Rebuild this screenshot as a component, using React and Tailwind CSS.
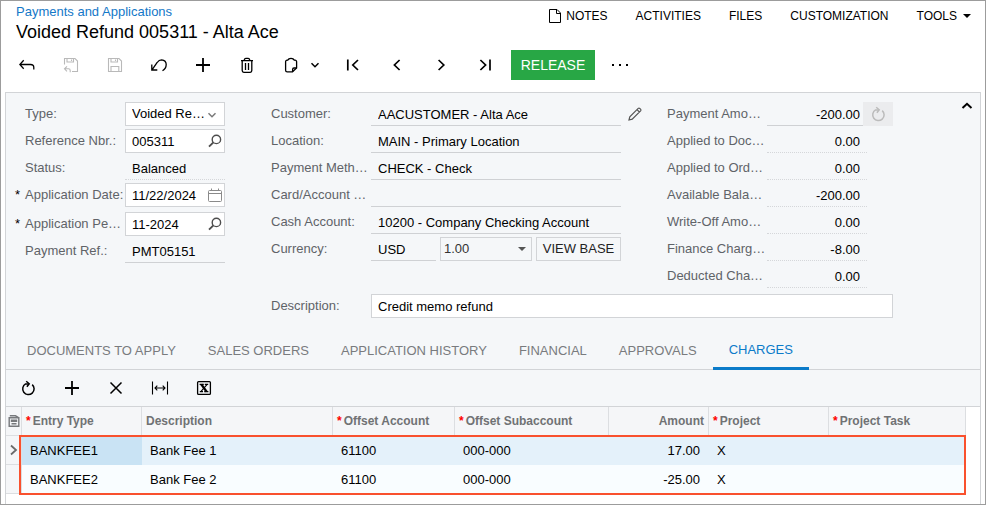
import React from 'react';
import clsx from 'clsx';

const Icon = ({ size = 16, width = 1, className, children }) => (
    <svg
        width={size}
        height={size}
        viewBox={`0 0 ${size} ${size}`}
        fill="none"
        stroke="currentColor"
        strokeWidth={width}
        className={clsx('shrink-0', className)}
        aria-hidden="true"
    >
        {children}
    </svg>
);

const BackIcon = () => (
    <Icon width={1.3}>
        <path d="M4.7 3.3 L0.8 7.5 L4.7 11.7 M1 7.5 H11.5 Q14.8 7.5 14.8 10.5 V12.5" />
    </Icon>
);

const SaveCloseIcon = () => (
    <Icon width={1.1}>
        <path d="M1.5 7.5 V1.5 H12 L14.5 4 V14.5 H9 M4 1.5 V5 H10.5 V1.5 M8.5 2.5 V4" />
        <path d="M4 9.3 L1.5 11.8 L4 14.3 M1.5 11.8 H5.5 Q7.2 11.8 7.2 13.5 V15.2" />
    </Icon>
);

const SaveIcon = () => (
    <Icon width={1.1}>
        <path d="M1.5 1.5 H12 L14.5 4 V14.5 H1.5 Z M4 1.5 V5 H10.5 V1.5 M8.5 2.5 V4 M4 14.5 V9.5 H11.8 V14.5" />
    </Icon>
);

const UndoIcon = () => (
    <Icon width={1.3}>
        <path d="M0.8 7.5 V13 H6.3 M1 12.8 L6.2 5.5 Q8 2.8 10.6 2.8 Q15.2 3.2 15.2 7.5 Q15.2 11.5 11.5 13.8" />
    </Icon>
);

const PlusIcon = () => (
    <Icon width={1.8}>
        <path d="M8 1 V15 M1 8 H15" />
    </Icon>
);

const TrashIcon = () => (
    <Icon width={1.3}>
        <path d="M2 3.6 H14 M5.3 3.4 Q5.3 1.4 7 1.4 H9 Q10.7 1.4 10.7 3.4 M3.2 3.6 V13.6 Q3.2 15.3 4.8 15.3 H11.2 Q12.8 15.3 12.8 13.6 V3.6 M6.5 6 V13 M9.5 6 V13" />
    </Icon>
);

const ClipboardIcon = () => (
    <Icon width={1.3}>
        <path d="M5 3.2 H4.2 Q2.6 3.2 2.6 4.8 V13.2 Q2.6 14.8 4.2 14.8 H9.5 L13.6 11 V4.8 Q13.6 3.2 12 3.2 H11" />
        <path d="M4.8 3.4 Q5.4 1.4 8 1.4 Q10.6 1.4 11.2 3.4" />
        <path d="M9.6 14.8 V12.4 Q9.6 11 11 11 H13.6" />
    </Icon>
);

const ChevronDownIcon = ({ className }) => (
    <Icon size={10} width={1.5} className={className}>
        <path d="M1.5 3.2 L5 6.7 L8.5 3.2" />
    </Icon>
);

const FirstIcon = () => (
    <Icon width={1.7}>
        <path d="M3.8 2.4 V13.6 M14 3 L8.8 8 L14 13" />
    </Icon>
);

const PrevIcon = () => (
    <Icon width={1.7}>
        <path d="M11.6 3 L6.4 8 L11.6 13" />
    </Icon>
);

const NextIcon = () => (
    <Icon width={1.7}>
        <path d="M6.6 3 L11.8 8 L6.6 13" />
    </Icon>
);

const LastIcon = () => (
    <Icon width={1.7}>
        <path d="M4.4 3 L9.6 8 L4.4 13 M14 2.4 V13.6" />
    </Icon>
);

const MoreIcon = () => (
    <Icon size={18} className="fill-current stroke-none">
        <rect x="1" y="8" width="2" height="2" />
        <rect x="8" y="8" width="2" height="2" />
        <rect x="15" y="8" width="2" height="2" />
    </Icon>
);

const NoteIcon = () => (
    <Icon size={14} width={1}>
        <path d="M1.5 0.5 H9 L12.5 4 V13.5 H1.5 Z M8.5 0.5 V4.5 H12.5" />
    </Icon>
);

const RefreshIcon = () => (
    <Icon width={1.5}>
        <path d="M12.2 4.6 A5.7 5.7 0 1 1 5.6 3.9 L9 3.9" />
        <path d="M6.2 1.2 L9.2 3.8 L6.9 6.8" />
    </Icon>
);

const DeleteIcon = () => (
    <Icon width={1.5}>
        <path d="M2.5 2.5 L13.5 13.5 M13.5 2.5 L2.5 13.5" />
    </Icon>
);

const FitColumnsIcon = () => (
    <Icon size={18} width={1.1}>
        <path d="M1.5 2.5 V15.5 M16.5 2.5 V15.5 M4 9 H14 M6.3 6.7 L4 9 L6.3 11.3 M11.7 6.7 L14 9 L11.7 11.3" />
    </Icon>
);

const ExcelIcon = () => (
    <Icon>
        <rect x="1.6" y="1.6" width="12.8" height="12.8" rx="1" strokeWidth={1.3} />
        <path d="M3.6 4.4 H7.8 M8.8 4.4 H12.2 M3.8 11.6 H7 M8.2 11.6 H12.4 M11.2 4.4 L4.8 11.6" strokeWidth={1.1} />
        <path d="M5.3 4.4 L10.6 11.6" strokeWidth={2.4} />
    </Icon>
);

const SearchIcon = () => (
    <Icon size={14} width={1.4}>
        <circle cx="8.4" cy="5.4" r="4.2" />
        <path d="M5.4 8.4 L1 12.6" strokeWidth={1.9} />
    </Icon>
);

const CalendarIcon = () => (
    <Icon size={14} width={1} className="text-[#8a8a8a]">
        <path d="M1.5 2.5 H12.5 Q13.5 2.5 13.5 3.5 V12.5 Q13.5 13.5 12.5 13.5 H1.5 Q0.5 13.5 0.5 12.5 V3.5 Q0.5 2.5 1.5 2.5 Z M0.5 5.5 H13.5 M3.5 0.5 V2.5 M10.5 0.5 V2.5" />
    </Icon>
);

const PencilIcon = () => (
    <Icon size={14} width={1.2}>
        <path d="M1 13 L1.8 9.8 L10.2 1.4 Q11 0.7 12 1.6 L12.5 2.1 Q13.3 3 12.6 3.8 L4.2 12.2 Z M9 2.6 L11.4 5" />
    </Icon>
);

const RecordIcon = () => (
    <Icon size={12} width={1.4} className="text-[#77797c]">
        <path d="M1.2 11.2 V2.7 H10.8 V11.2 Z M1.8 0.8 H7.5 L10.5 2.7 M3.5 5.2 H8.5 V6.4 H3.5 Z M3.5 8.8 H8.5" />
    </Icon>
);

const ToolButton = ({ label, className, children, ...props }) => (
    <button aria-label={label} className={clsx('h-[30px] w-11 flex items-center justify-center', className)} {...props}>
        {children}
    </button>
);

const Row = ({ id, label, required, children }) => (
    <div className="flex h-6">
        <label htmlFor={id} className="w-[110px] shrink-0 flex leading-6 text-[#5f6368] whitespace-nowrap">
            <span className="w-2.5 text-black">{required && '*'}</span>
            {label}
        </label>
        {children}
    </div>
);

const BoxField = ({ id, value, icon, buttonLabel }) => (
    <div className="w-[100px] h-6 flex items-center bg-white border border-[#d2d4d7] pr-px">
        <input id={id} defaultValue={value} className="min-w-0 flex-1 h-full pl-1.5 outline-none" />
        <button type="button" aria-label={buttonLabel} className="text-[#4d4d4d] px-px">{icon}</button>
    </div>
);

const LineField = ({ id, value, dotted, className }) => (
    <input
        id={id}
        readOnly
        defaultValue={value}
        className={clsx(
            'h-6 min-w-0 pt-0.5 px-[7px] text-black outline-none border-b',
            dotted ? 'border-dotted border-[#d5d7da]' : 'border-[#cfd1d4]',
            className
        )}
    />
);

const customerFields = [
    { id: 'location', label: 'Location:', value: 'MAIN - Primary Location' },
    { id: 'method', label: 'Payment Meth…', value: 'CHECK - Check' },
    { id: 'card', label: 'Card/Account …', value: '' },
    { id: 'cash', label: 'Cash Account:', value: '10200 - Company Checking Account' }
];

const amountFields = [
    { id: 'applied-doc', label: 'Applied to Doc…', value: '0.00' },
    { id: 'applied-ord', label: 'Applied to Ord…', value: '0.00' },
    { id: 'available', label: 'Available Bala…', value: '-200.00' },
    { id: 'writeoff', label: 'Write-Off Amo…', value: '0.00' },
    { id: 'finance', label: 'Finance Charg…', value: '-8.00' },
    { id: 'deducted', label: 'Deducted Cha…', value: '0.00' }
];

const tabs = ['DOCUMENTS TO APPLY', 'SALES ORDERS', 'APPLICATION HISTORY', 'FINANCIAL', 'APPROVALS', 'CHARGES'];

const columns = [
    { label: 'Entry Type', required: true },
    { label: 'Description' },
    { label: 'Offset Account', required: true },
    { label: 'Offset Subaccount', required: true },
    { label: 'Amount', right: true },
    { label: 'Project', required: true },
    { label: 'Project Task', required: true }
];

const charges = [
    ['BANKFEE1', 'Bank Fee 1', '61100', '000-000', '17.00', 'X', ''],
    ['BANKFEE2', 'Bank Fee 2', '61100', '000-000', '-25.00', 'X', '']
];

const Header = () => (
    <header className="flex justify-between items-start pl-[15px] pr-3.5 pt-[3px]">
        <div>
            <a href="#payments" className="block leading-4 text-[#1478c8]">Payments and Applications</a>
            <h1 className="text-lg leading-6">Voided Refund 005311 - Alta Ace</h1>
        </div>
        <nav className="flex gap-7 pt-1 text-xs leading-4" aria-label="Document menu">
            <button className="flex items-center gap-1"><NoteIcon />NOTES</button>
            <button>ACTIVITIES</button>
            <button>FILES</button>
            <button>CUSTOMIZATION</button>
            <button className="flex items-center gap-1.5">
                TOOLS
                <svg width="8" height="4" viewBox="0 0 8 4" aria-hidden="true"><path d="M0 0 H8 L4 4 Z" fill="currentColor" /></svg>
            </button>
        </nav>
    </header>
);

const Toolbar = () => (
    <div className="flex items-center pl-1 pt-1.5 pb-3">
        <ToolButton label="Back"><BackIcon /></ToolButton>
        <ToolButton label="Save and close" disabled className="text-[#b9b9b9]"><SaveCloseIcon /></ToolButton>
        <ToolButton label="Save" disabled className="text-[#b9b9b9]"><SaveIcon /></ToolButton>
        <ToolButton label="Undo"><UndoIcon /></ToolButton>
        <ToolButton label="Add"><PlusIcon /></ToolButton>
        <ToolButton label="Delete"><TrashIcon /></ToolButton>
        <button aria-label="Clipboard" className="h-[30px] w-[61px] pl-3.5 flex items-center gap-[11px]">
            <ClipboardIcon />
            <ChevronDownIcon />
        </button>
        <ToolButton label="First"><FirstIcon /></ToolButton>
        <ToolButton label="Previous"><PrevIcon /></ToolButton>
        <ToolButton label="Next"><NextIcon /></ToolButton>
        <ToolButton label="Last"><LastIcon /></ToolButton>
        <button className="ml-[5px] h-[30px] w-[84px] bg-[#28a745] text-white text-sm">RELEASE</button>
        <ToolButton label="More" className="w-[50px]"><MoreIcon /></ToolButton>
    </div>
);

const Summary = () => (
    <form className="flex items-start pt-[9px] pl-[9px] pr-[5px]">
        <div className="w-[246px] shrink-0 flex flex-col gap-[5px]">
            <div className="flex flex-col gap-[3px]">
                <Row id="type" label="Type:">
                    <div className="relative w-[100px] h-6">
                        <select id="type" className="appearance-none w-full h-full pl-1.5 bg-white border border-[#d2d4d7] outline-none">
                            <option>Voided Re…</option>
                        </select>
                        <ChevronDownIcon className="absolute right-2 top-2 text-[#7a7a7a] pointer-events-none" />
                    </div>
                </Row>
                <Row id="ref" label="Reference Nbr.:">
                    <BoxField id="ref" value="005311" icon={<SearchIcon />} buttonLabel="Find reference" />
                </Row>
                <Row id="status" label="Status:">
                    <LineField id="status" value="Balanced" dotted className="w-[100px]" />
                </Row>
                <Row id="date" label="Application Date:" required>
                    <BoxField id="date" value="11/22/2024" icon={<CalendarIcon />} buttonLabel="Pick date" />
                </Row>
            </div>
            <div className="flex flex-col gap-[3px]">
                <Row id="period" label="Application Pe…" required>
                    <BoxField id="period" value="11-2024" icon={<SearchIcon />} buttonLabel="Find period" />
                </Row>
                <Row id="payref" label="Payment Ref.:">
                    <LineField id="payref" value="PMT05151" className="w-[100px]" />
                </Row>
            </div>
        </div>

        <div className="flex flex-col gap-1.5">
            <div className="flex gap-3">
                <div className="w-[384px] flex flex-col gap-[3px]">
                    <Row id="customer" label="Customer:">
                        <LineField id="customer" value="AACUSTOMER - Alta Ace" className="w-[250px]" />
                        <button type="button" aria-label="Edit customer" className="ml-[7px] text-[#555]"><PencilIcon /></button>
                    </Row>
                    {customerFields.map((f) => (
                        <Row key={f.id} id={f.id} label={f.label}>
                            <LineField id={f.id} value={f.value} className="w-[250px]" />
                        </Row>
                    ))}
                    <Row id="currency" label="Currency:">
                        <div className="flex gap-1">
                            <LineField id="currency" value="USD" className="w-[65px]" />
                            <div className="relative w-[92px] h-6">
                                <select aria-label="Rate" className="appearance-none w-full h-full pl-[3px] text-[#333] bg-transparent border border-[#d2d4d7] outline-none">
                                    <option>1.00</option>
                                </select>
                                <svg width="8" height="4" viewBox="0 0 8 4" className="absolute right-1.5 top-2.5 text-[#555] pointer-events-none" aria-hidden="true">
                                    <path d="M0 0 H8 L4 4 Z" fill="currentColor" />
                                </svg>
                            </div>
                            <button type="button" className="w-[85px] h-6 border border-[#d2d4d7] text-[#222] whitespace-nowrap">VIEW BASE</button>
                        </div>
                    </Row>
                </div>

                <div className="flex flex-col gap-[3px]">
                    <Row id="amount" label="Payment Amo…">
                        <LineField id="amount" value="-200.00" className="w-24 text-right !pr-[3px]" />
                        <button type="button" disabled aria-label="Recalculate" className="w-[30px] h-6 flex items-center justify-center bg-[#ebecee] text-[#bbb]">
                            <RefreshIcon />
                        </button>
                    </Row>
                    {amountFields.map((f) => (
                        <Row key={f.id} id={f.id} label={f.label}>
                            <LineField id={f.id} value={f.value} dotted className="w-[100px] text-right" />
                        </Row>
                    ))}
                </div>
            </div>
            <Row id="description" label="Description:">
                <input id="description" defaultValue="Credit memo refund" className="flex-1 h-6 min-w-0 px-1.5 bg-white border border-[#d2d4d7] outline-none" />
            </Row>
        </div>

        <button type="button" aria-label="Collapse" className="ml-auto">
            <Icon width={2}><path d="M3.5 6 L8 1.8 L12.5 6" /></Icon>
        </button>
    </form>
);

const Tabs = () => (
    <div role="tablist" className="mt-3.5 h-[38px] pl-[5px] flex border-b border-[#d2d4d7]">
        {tabs.map((tab) => {
            const active = tab === 'CHARGES';
            return (
                <button
                    key={tab}
                    role="tab"
                    aria-selected={active}
                    className={clsx('h-[38px] px-4 whitespace-nowrap', active ? 'text-[#0b7bc9] border-b-3 border-[#0b7bc9]' : 'text-[#797b7e]')}
                >
                    {tab}
                </button>
            );
        })}
    </div>
);

const Grid = () => (
    <div className="bg-white flex-1 pr-3.5">
        <div className="relative">
            <table className="w-full table-fixed border-separate border-spacing-0">
                <colgroup>
                    <col className="w-4" />
                    <col className="w-[120px]" />
                    <col className="w-[191px]" />
                    <col className="w-[122px]" />
                    <col className="w-[154px]" />
                    <col className="w-[100px]" />
                    <col className="w-[120px]" />
                    <col />
                </colgroup>
                <thead>
                    <tr className="h-[29px] bg-[#f5f6f8] text-xs text-[#707274] text-left">
                        <th className="p-0 pl-0.5 border-r border-b border-[#dcdee1]"><RecordIcon /></th>
                        {columns.map((c) => (
                            <th
                                key={c.label}
                                scope="col"
                                className={clsx('p-0 px-1 border-r border-b border-[#dcdee1] whitespace-nowrap', c.right && 'text-right')}
                            >
                                {c.required && <span className="mr-0.5 text-[#f00]">*</span>}
                                {c.label}
                            </th>
                        ))}
                    </tr>
                </thead>
                <tbody>
                    {charges.map((row, r) => (
                        <tr key={row[0]} className={clsx('h-[29px]', r === 0 ? 'bg-[#e4f1fa]' : 'bg-[#f9fdff]')}>
                            <td className="p-0 pl-0.5 bg-[#f5f6f8] border-r border-b border-[#dcdee1]">
                                {r === 0 && <Icon size={12} width={1.8} className="text-[#6b6b6b]"><path d="M3 1.5 L8 6 L3 10.5" /></Icon>}
                            </td>
                            {row.map((cell, i) => (
                                <td
                                    key={i}
                                    className={clsx('p-0 px-2', i === 4 && 'text-right !pr-[9px]', r === 0 && i === 0 && 'bg-[#c9e3f4]')}
                                >
                                    {cell}
                                </td>
                            ))}
                        </tr>
                    ))}
                </tbody>
            </table>
            {/* Frame around the charge lines */}
            <div className="absolute left-[13px] right-0 top-7 -bottom-px border-2 border-[#f9512e] pointer-events-none" />
        </div>
    </div>
);

const App = () => (
    <div className="min-h-screen flex flex-col border border-[#9c9c9c] bg-white text-black text-[13px] leading-4 font-['Liberation_Sans',Arial,sans-serif]">
        <Header />
        <Toolbar />
        <main className="mx-1 flex-1 flex flex-col border border-b-0 border-[#d2d4d7] bg-[#f5f7f9]">
            <Summary />
            <Tabs />
            <div className="flex h-[37px] items-center border-b border-[#d2d4d7]">
                <ToolButton label="Refresh"><RefreshIcon /></ToolButton>
                <ToolButton label="Add row"><PlusIcon /></ToolButton>
                <ToolButton label="Delete row"><DeleteIcon /></ToolButton>
                <ToolButton label="Fit columns"><FitColumnsIcon /></ToolButton>
                <ToolButton label="Export to Excel"><ExcelIcon /></ToolButton>
            </div>
            <Grid />
        </main>
    </div>
);

export default App;
